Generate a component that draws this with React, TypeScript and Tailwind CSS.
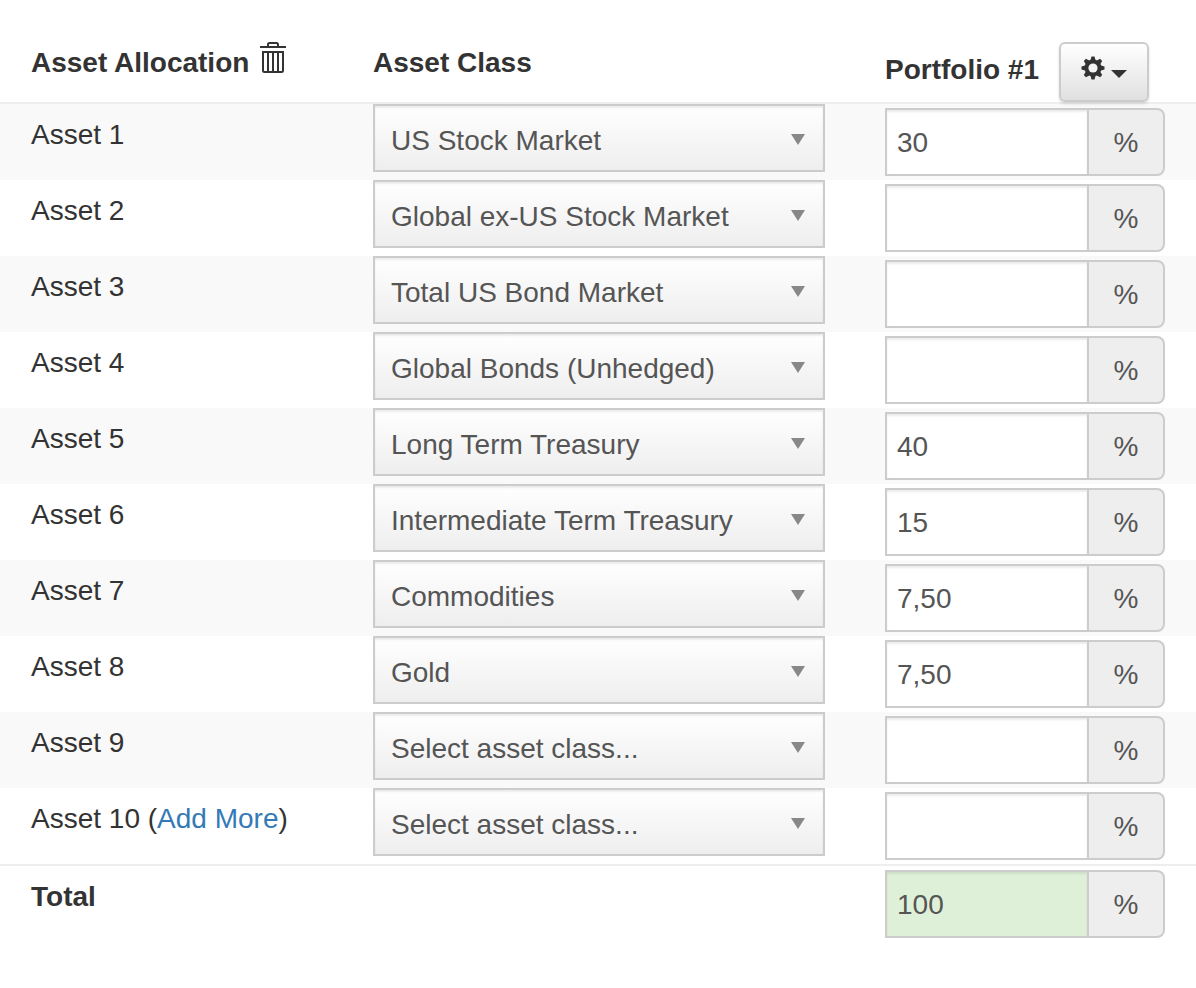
import { useState } from 'react'

const ASSET_CLASSES = [
  'US Stock Market',
  'Global ex-US Stock Market',
  'Total US Bond Market',
  'Global Bonds (Unhedged)',
  'Long Term Treasury',
  'Intermediate Term Treasury',
  'Commodities',
  'Gold',
]

interface Asset {
  assetClass: string
  weight: string
}

const INITIAL_ASSETS: Asset[] = [
  { assetClass: 'US Stock Market', weight: '30' },
  { assetClass: 'Global ex-US Stock Market', weight: '' },
  { assetClass: 'Total US Bond Market', weight: '' },
  { assetClass: 'Global Bonds (Unhedged)', weight: '' },
  { assetClass: 'Long Term Treasury', weight: '40' },
  { assetClass: 'Intermediate Term Treasury', weight: '15' },
  { assetClass: 'Commodities', weight: '7,50' },
  { assetClass: 'Gold', weight: '7,50' },
  { assetClass: '', weight: '' },
  { assetClass: '', weight: '' },
]

// Weights use a decimal comma
function parseWeight(s: string): number {
  return parseFloat(s.replace(',', '.')) || 0
}

function formatTotal(n: number): string {
  return Number.isInteger(n) ? String(n) : n.toFixed(2).replace('.', ',')
}

function TrashIcon() {
  return (
    <svg width="26" height="32" viewBox="0 0 26 32" fill="none" stroke="#333" strokeWidth="2" aria-hidden="true">
      <path d="M0 5h26" />
      <path d="M8 5V2.500Q8 1 9.500 1h7Q18 1 18 2.500V5" />
      <path d="M3 10h20v18.500q0 1.500-1.500 1.500h-17Q3 30 3 28.500z" />
      <path d="M8 10v20M13 10v20M18 10v20" />
    </svg>
  )
}

function GearIcon() {
  return (
    <svg width="24" height="24" viewBox="0 0 24 24" aria-hidden="true">
      <g fill="#333">
        {[0, 45, 90, 135].map((a) => (
          <path key={a} d="M9.500 4 10.500 0.500h3l1 3.500v16l-1 3.500h-3L9.500 20z" transform={`rotate(${a} 12 12)`} />
        ))}
        <circle cx="12" cy="12" r="8.500" />
      </g>
      <circle cx="12" cy="12" r="4.600" fill="#f5f5f5" />
    </svg>
  )
}

interface PercentInputProps {
  label: string
  value: string
  onChange?: (value: string) => void
  total?: boolean
}

function PercentInput({ label, value, onChange, total }: PercentInputProps) {
  return (
    <div className="flex h-[68px] w-[280px] text-[#555]">
      <input
        type="text"
        aria-label={label}
        value={value}
        readOnly={!onChange}
        onChange={(e) => onChange?.(e.target.value)}
        className={`w-[204px] border-2 border-[#ccc] px-[10px] pt-[2px] shadow-[inset_0_2px_2px_rgba(0,0,0,0.075)] focus:outline-none ${total ? 'bg-[#dff0d8]' : 'bg-white'}`}
      />
      <span className="flex flex-1 items-center justify-center rounded-r-lg border-2 border-l-0 border-[#ccc] bg-[#eee] pt-[2px]">%</span>
    </div>
  )
}

export default function App() {
  const [assets, setAssets] = useState<Asset[]>(INITIAL_ASSETS)

  const update = (index: number, patch: Partial<Asset>) =>
    setAssets((prev) => prev.map((a, i) => (i === index ? { ...a, ...patch } : a)))

  const total = assets.reduce((sum, a) => sum + parseWeight(a.weight), 0)

  return (
    <main className="min-h-screen bg-white font-['Liberation_Sans',Arial,sans-serif] text-[28px] leading-[42px] text-[#333]">
      <table className="w-full table-fixed border-separate border-spacing-0 text-left">
        <colgroup>
          <col className="w-[373px]" />
          <col />
          <col className="w-[311px]" />
        </colgroup>
        <thead>
          <tr className="align-top">
            <th className="border-b-2 border-[#eee] pt-[42px] pl-[31px]">
              <div className="flex items-start gap-[11px]">
                Asset Allocation
                <button type="button" aria-label="Clear allocation" className="cursor-pointer">
                  <TrashIcon />
                </button>
              </div>
            </th>
            <th className="border-b-2 border-[#eee] pt-[42px]">Asset Class</th>
            <th className="border-b-2 border-[#eee] pt-[42px]">
              <div className="flex gap-5">
                <span className="leading-[56px]">Portfolio #1</span>
                <button
                  type="button"
                  aria-label="Portfolio #1 options"
                  className="flex h-[60px] w-[90px] cursor-pointer justify-center gap-[6px] rounded-md border-2 border-[#ccc] bg-linear-to-b from-white to-[#e0e0e0] pt-3 shadow-[0_2px_3px_rgba(0,0,0,0.12)]"
                >
                  <GearIcon />
                  <svg width="16" height="24" viewBox="0 0 16 24" aria-hidden="true">
                    <path d="M0 14h16l-8 8z" fill="#333" />
                  </svg>
                </button>
              </div>
            </th>
          </tr>
        </thead>
        <tbody>
          {assets.map((asset, i) => (
            <tr key={i} className="align-top odd:bg-[#f9f9f9]">
              <td className="pt-[10px] pl-[31px]">
                <label htmlFor={`asset-${i + 1}`}>Asset {i + 1}</label>
                {i === assets.length - 1 && (
                  <>
                    {' '}(<a href="#add-more" className="text-[#337ab7] hover:underline">Add More</a>)
                  </>
                )}
              </td>
              <td className="pb-2">
                <div className="relative w-[452px]">
                  <select
                    id={`asset-${i + 1}`}
                    value={asset.assetClass}
                    onChange={(e) => update(i, { assetClass: e.target.value })}
                    className="block h-[68px] w-full appearance-none border-2 border-[#ccc] bg-linear-to-b from-white to-[#eee] pt-[6px] pr-12 pl-4 text-[#555] shadow-[inset_0_2px_2px_rgba(0,0,0,0.075)] focus:outline-none"
                  >
                    <option value="">Select asset class...</option>
                    {ASSET_CLASSES.map((name) => (
                      <option key={name} value={name}>{name}</option>
                    ))}
                  </select>
                  <svg className="pointer-events-none absolute top-[30px] right-5" width="14" height="11" viewBox="0 0 14 11" aria-hidden="true">
                    <path d="M0 0h14L7 11z" fill="#888" />
                  </svg>
                </div>
              </td>
              <td className="py-1">
                <PercentInput
                  label={`Asset ${i + 1} weight`}
                  value={asset.weight}
                  onChange={(weight) => update(i, { weight })}
                />
              </td>
            </tr>
          ))}
        </tbody>
        <tfoot>
          <tr className="align-top">
            <th className="border-t-2 border-[#eee] pt-[10px] pl-[31px]">Total</th>
            <td className="border-t-2 border-[#eee]" />
            <td className="border-t-2 border-[#eee] py-1">
              <PercentInput label="Total weight" value={formatTotal(total)} total />
            </td>
          </tr>
        </tfoot>
      </table>
    </main>
  )
}
